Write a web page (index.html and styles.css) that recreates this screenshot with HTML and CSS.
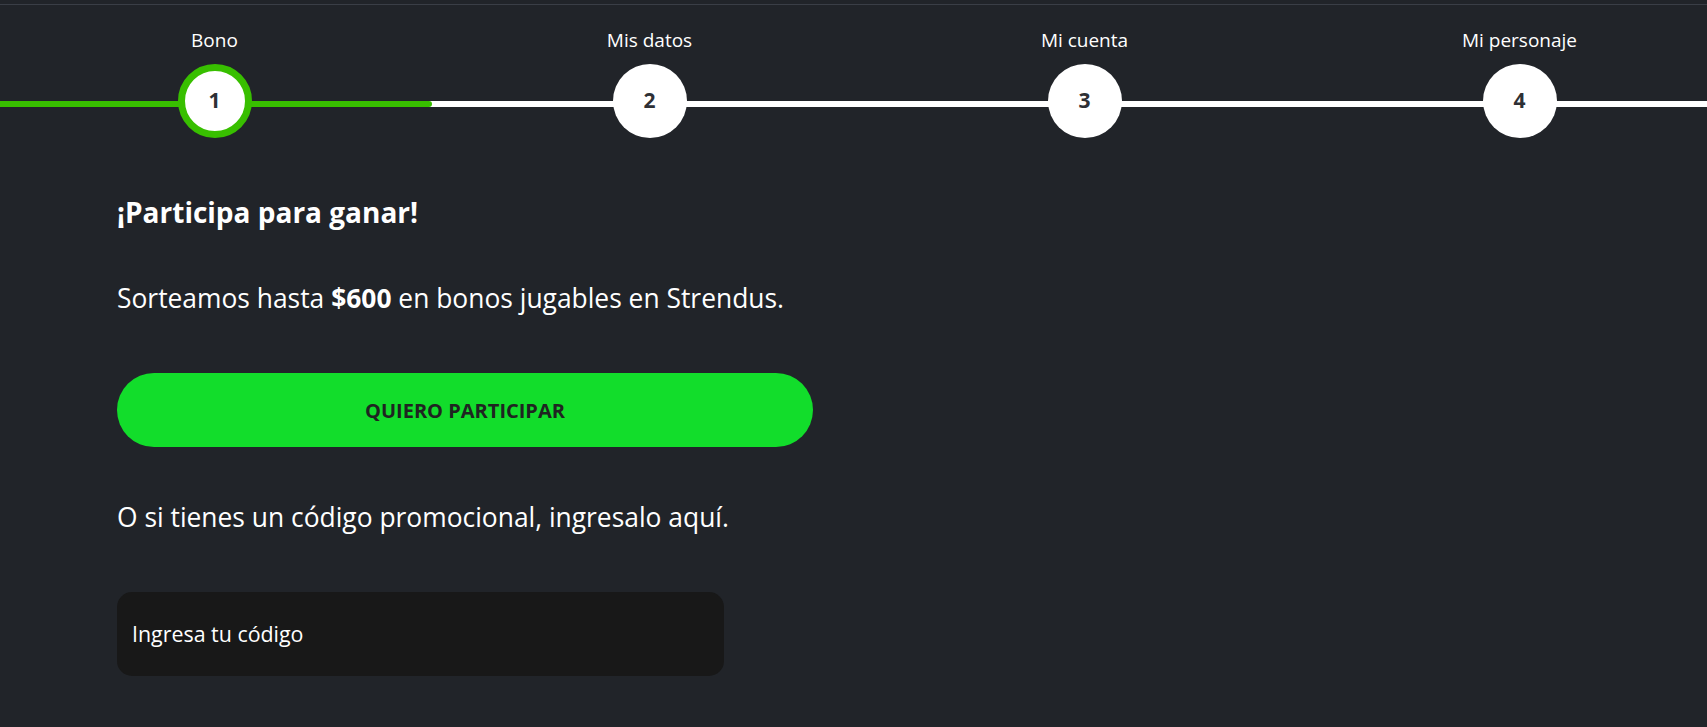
FILE: index.html
```html
<!DOCTYPE html>
<html lang="es">
<head>
<meta charset="utf-8">
<title>Bono</title>
<link rel="stylesheet" href="styles.css">
</head>
<body>
<div class="topbar"></div>
<div class="stepper">
  <div class="track"></div>
  <div class="progress"></div>
  <div class="steps">
    <div class="step active">
      <div class="step-label">Bono</div>
      <div class="step-circle">1</div>
    </div>
    <div class="step">
      <div class="step-label">Mis datos</div>
      <div class="step-circle">2</div>
    </div>
    <div class="step">
      <div class="step-label">Mi cuenta</div>
      <div class="step-circle">3</div>
    </div>
    <div class="step">
      <div class="step-label">Mi personaje</div>
      <div class="step-circle">4</div>
    </div>
  </div>
</div>
<main class="content">
  <h1 class="title">¡Participa para ganar!</h1>
  <p class="lead">Sorteamos hasta <strong>$600</strong> en bonos jugables en Strendus.</p>
  <button class="cta" type="button">QUIERO PARTICIPAR</button>
  <p class="lead promo">O si tienes un código promocional, ingresalo aquí.</p>
  <input class="code" type="text" placeholder="Ingresa tu código">
</main>
</body>
</html>
```

FILE: styles.css
```css
html, body {
  margin: 0;
  padding: 0;
}
body {
  background: #212429;
  color: #ffffff;
  font-family: "Open Sans", "Noto Sans", sans-serif;
  overflow: hidden;
  width: 1707px;
  height: 727px;
}
.topbar {
  height: 4px;
  border-bottom: 1px solid #3a3e46;
}
.stepper {
  position: relative;
  padding-top: 23px;
}
.track {
  position: absolute;
  left: 0;
  right: 0;
  top: 96px;
  height: 6px;
  background: #ffffff;
}
.progress {
  position: absolute;
  left: 0;
  top: 96px;
  width: 432px;
  height: 6px;
  background: #38bf00;
  border-radius: 0 3px 3px 0;
}
.steps {
  position: relative;
  display: flex;
  margin-left: -3px;
  width: 1740px;
}
.step {
  width: 435px;
  display: flex;
  flex-direction: column;
  align-items: center;
  gap: 12px;
}
.step-label {
  font-size: 19px;
  line-height: 24px;
  color: #ffffff;
}
.step-circle {
  box-sizing: border-box;
  width: 74px;
  height: 74px;
  border-radius: 50%;
  background: #ffffff;
  display: flex;
  align-items: center;
  justify-content: center;
  font-weight: 700;
  font-size: 21px;
  color: #2e3035;
  padding-bottom: 3px;
}
.step.active .step-circle {
  border: 7px solid #38bf00;
}
.content {
  padding-left: 117px;
  display: flex;
  flex-direction: column;
  align-items: flex-start;
}
.title {
  margin: 55px 0 0;
  font-size: 28px;
  line-height: 38px;
  font-weight: 700;
}
.lead {
  margin: 49px 0 0;
  font-size: 26.4px;
  line-height: 36px;
  font-weight: 400;
}
.lead strong {
  font-weight: 700;
}
.cta {
  margin-top: 57px;
  width: 696px;
  height: 74px;
  border: 0;
  border-radius: 37px;
  background: #12dd2b;
  color: #1f2421;
  font-family: "Open Sans", "Noto Sans", sans-serif;
  font-size: 20px;
  font-weight: 700;
  cursor: pointer;
}
.lead.promo {
  margin-top: 52px;
}
.code {
  margin-top: 57px;
  box-sizing: border-box;
  width: 607px;
  height: 84px;
  border: 0;
  border-radius: 15px;
  background: #181818;
  color: #ffffff;
  font-family: "Open Sans", "Noto Sans", sans-serif;
  font-size: 21.4px;
  padding: 0 15px 2px;
  outline: none;
}
.code::placeholder {
  color: #ffffff;
  opacity: 1;
}
```
